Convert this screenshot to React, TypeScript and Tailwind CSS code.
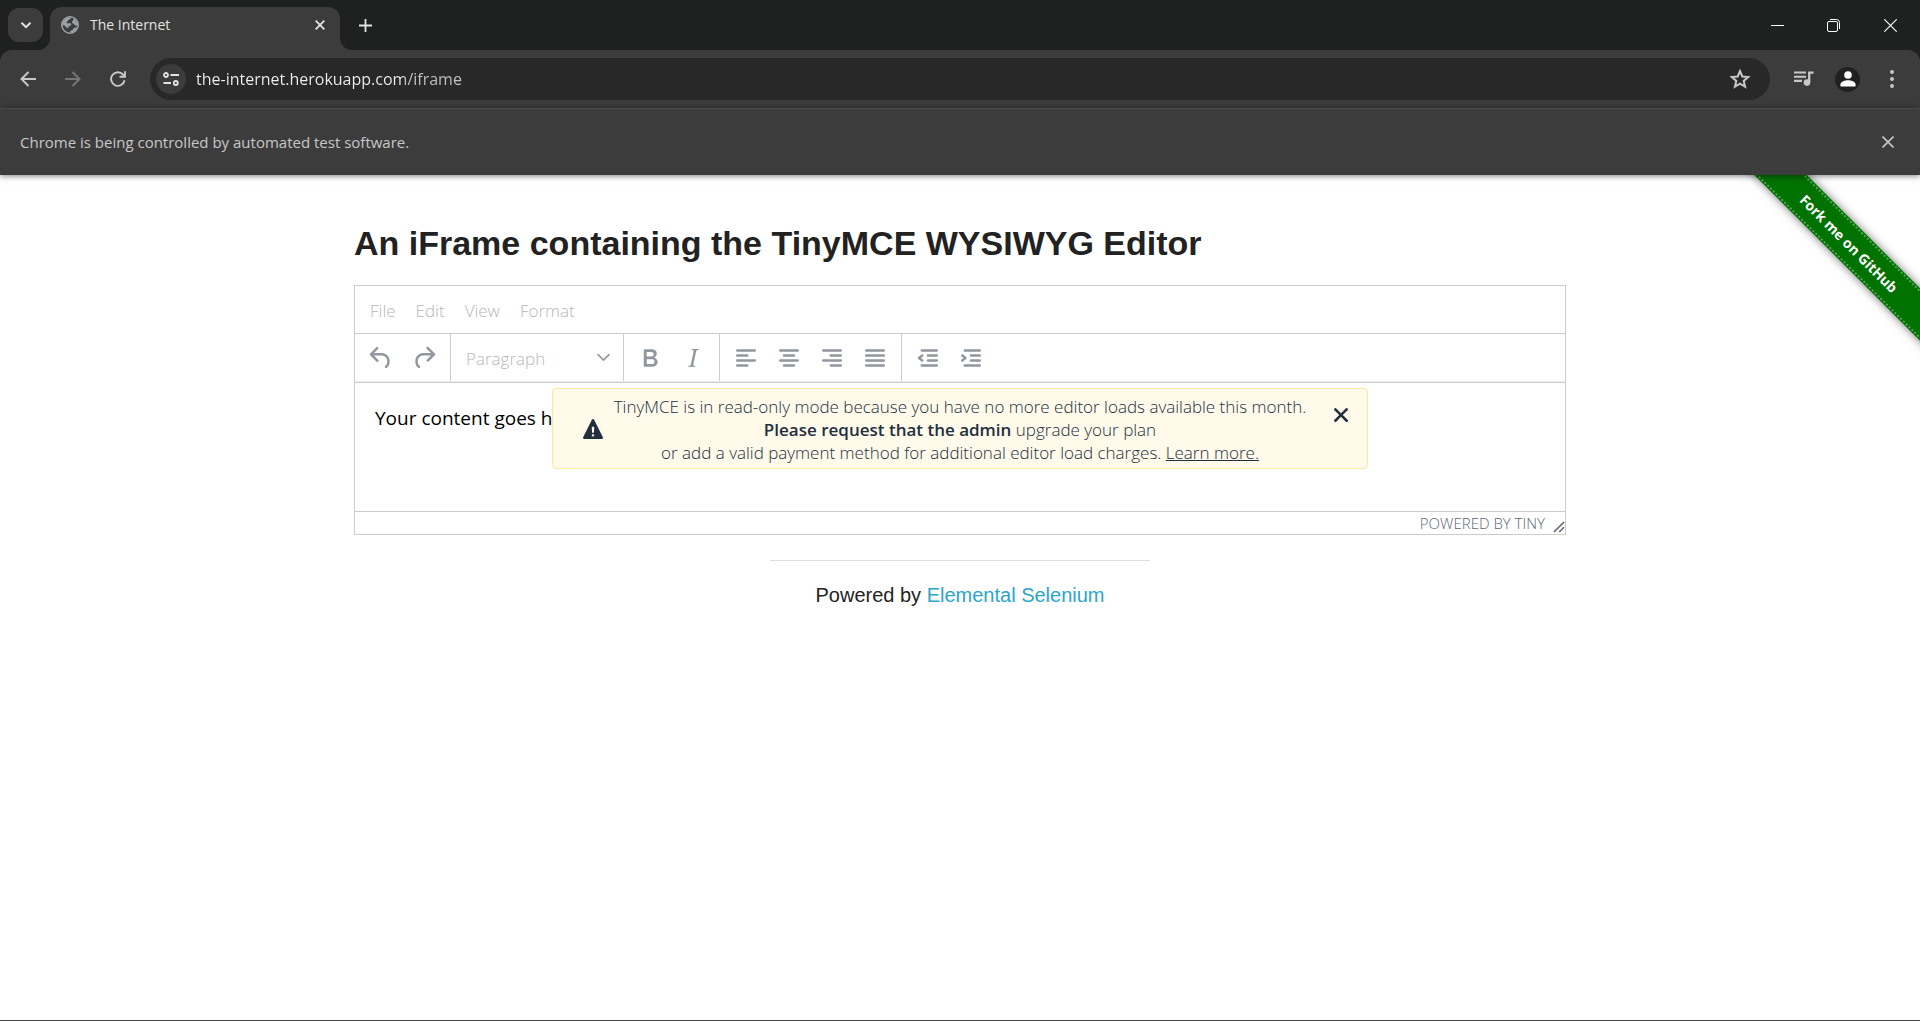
import type { ReactNode } from "react";

function Svg({ className, box = "0 0 24 24", children }: { className: string; box?: string; children: ReactNode }) {
  return (
    <svg viewBox={box} className={className} fill="none" stroke="currentColor" aria-hidden="true">
      {children}
    </svg>
  );
}

function TabStrip() {
  return (
    <div className="flex h-[50px] items-start bg-[#1f2120] text-[#e3e3e3]">
      <button aria-label="Search tabs" className="mt-2 ml-2 flex h-[34px] w-[35px] items-center justify-center rounded-[11px] bg-[#3c3c3c]">
        <Svg className="h-3 w-3" box="0 0 12 12">
          <path d="M1.5 3.8 6 8.2l4.5-4.4" strokeWidth="2" />
        </Svg>
      </button>
      <div className="relative ml-[7px] flex h-[43px] w-[290px] items-center self-end rounded-t-xl bg-[#3c3c3c] pr-[10px] pb-[7px] pl-[11px]">
        <Svg className="absolute bottom-0 -left-3 h-3 w-3 text-[#3c3c3c]" box="0 0 12 12">
          <path d="M12 0v12H0A12 12 0 0 0 12 0Z" fill="currentColor" stroke="none" />
        </Svg>
        <Svg className="absolute -right-3 bottom-0 h-3 w-3 text-[#3c3c3c]" box="0 0 12 12">
          <path d="M0 0v12h12A12 12 0 0 1 0 0Z" fill="currentColor" stroke="none" />
        </Svg>
        <Svg className="h-[18px] w-[18px]" box="0 0 18 18">
          <circle cx="9" cy="9" r="8.200" strokeWidth="1.600" className="text-[#9aa0a6]" />
          <g fill="#9aa0a6" stroke="none">
            <path d="M2 6C3 3 6 1 9.500 1.200c.8 1.500-.4 2.300-1.600 2.600-1 .3-.7 1.300-1.700 1.600-1 .4-.9 1.800.2 1.900h2.800c1.700 0 1.200 2.300 0 2.500-1.500.2-1.600.8-1.700 1.700-.2 1-2 .7-2.600-.4C4.300 9.900 3.300 9 1.200 8.900Z" />
            <path d="M12.500 2.200C15 3.500 16.800 6 16.900 9c-1.500 1.500-3 .6-3.500-.5-.5-1.200-2.300-.8-2.500-2.300-.2-1.300 1.900-1.700 1.600-4Z" />
            <path d="M16.200 11.500c-1 2.800-3.400 4.800-6.700 5.200-.9-1.500.3-2.200 1.500-2.500 1.300-.4.9-1.600 2-2.200.9-.6 2.200-.6 3.200-.5Z" />
          </g>
        </Svg>
        <span className="ml-[11px] grow text-sm">The Internet</span>
        <button aria-label="Close tab" className="flex h-5 w-5 items-center justify-center">
          <Svg className="h-[10px] w-[10px]" box="0 0 10 10">
            <path d="m.7.7 8.600 8.600M9.300.7.7 9.300" strokeWidth="1.800" />
          </Svg>
        </button>
      </div>
      <button aria-label="New tab" className="mt-[15px] ml-[15px] flex h-5 w-5 items-center justify-center">
        <Svg className="h-[13px] w-[13px]" box="0 0 13 13">
          <path d="M6.500 0v13M0 6.500h13" strokeWidth="1.800" />
        </Svg>
      </button>
      <div className="ml-auto flex h-[50px] items-center text-white">
        <button aria-label="Minimize" className="flex h-full w-14 items-center justify-center">
          <Svg className="h-[13px] w-[13px]" box="0 0 13 13">
            <path d="M0 6.500h13" />
          </Svg>
        </button>
        <button aria-label="Restore" className="flex h-full w-14 items-center justify-center">
          <Svg className="h-[13px] w-[13px]" box="0 0 13 13">
            <rect x=".5" y="2.500" width="10" height="10" rx="1.500" />
            <path d="M3 .5h6.500a3 3 0 0 1 3 3V10" />
          </Svg>
        </button>
        <button aria-label="Close window" className="flex h-full w-[59px] items-center justify-center">
          <Svg className="h-[13px] w-[13px]" box="0 0 13 13">
            <path d="m.3.3 12.400 12.400M12.700.3.3 12.700" strokeWidth="1.100" />
          </Svg>
        </button>
      </div>
    </div>
  );
}

function AddressBar() {
  return (
    <div className="bg-[#1f2120]">
      <div className="flex h-[58px] items-center rounded-t-xl bg-[#3c3c3c] text-[#c7c7c7]">
        <button aria-label="Back" className="ml-4 flex h-6 w-6 items-center justify-center">
          <Svg className="h-4 w-4" box="0 0 16 16">
            <path d="M16 8H1.500M8.500 1l-7 7 7 7" strokeWidth="2" />
          </Svg>
        </button>
        <button aria-label="Forward" disabled className="ml-[21px] flex h-6 w-6 items-center justify-center text-[#757575]">
          <Svg className="h-4 w-4" box="0 0 16 16">
            <path d="M0 8h14.500M7.500 1l7 7-7 7" strokeWidth="2" />
          </Svg>
        </button>
        <button aria-label="Reload" className="ml-[21px] flex h-6 w-6 items-center justify-center">
          <Svg className="h-4 w-4" box="0 0 16 16">
            <path d="M14.600 9.300A6.800 6.800 0 1 1 13 3.500l1.600 1.700M15 .3v5.400H9.500" strokeWidth="1.900" />
          </Svg>
        </button>
        <div className="ml-5 flex h-[42px] min-w-0 grow items-center rounded-full bg-[#282828] pr-[18px] pl-[6px]">
          <button aria-label="View site information" className="flex h-[30px] w-[30px] shrink-0 items-center justify-center rounded-full bg-[#3c3c3c] text-[#e3e3e3]">
            <Svg className="h-[14px] w-4" box="0 0 16 14">
              <circle cx="3" cy="3" r="2" strokeWidth="1.800" />
              <circle cx="12.800" cy="11" r="2" strokeWidth="1.800" />
              <path d="M7.500 3H16M.5 11H8" strokeWidth="1.800" />
            </Svg>
          </button>
          <input
            aria-label="Address"
            defaultValue="the-internet.herokuapp.com/iframe"
            className="ml-[10px] min-w-0 grow bg-[linear-gradient(to_right,#f0f0f0_207px,#c4c4c4_207px)] bg-clip-text text-base text-transparent outline-none"
          />
          <button aria-label="Bookmark this tab">
            <Svg className="h-6 w-6">
              <path d="m12 4 2.300 5.500 5.900.5-4.500 3.900 1.400 5.800-5.100-3.100-5.100 3.100 1.400-5.800L3.800 10l5.900-.5Z" strokeWidth="2" />
            </Svg>
          </button>
        </div>
        <button aria-label="Media controls" className="ml-[22px] flex h-6 w-6 items-center justify-center">
          <Svg className="h-4 w-5" box="0 0 20 16">
            <path d="M0 1.500h12M0 5.700h12M0 9.900h8" strokeWidth="2.100" />
            <path d="M15.200 11V1.600H19.500" strokeWidth="2.300" />
            <circle cx="13" cy="11.600" r="3.300" fill="currentColor" stroke="none" />
          </Svg>
        </button>
        <button aria-label="Profile" className="ml-[19px] flex h-[25px] w-[25px] items-center justify-center rounded-full bg-[#1f2120] text-white">
          <Svg className="h-4 w-4" box="0 0 16 16">
            <g fill="currentColor" stroke="none">
              <circle cx="8" cy="4" r="3.800" />
              <path d="M.5 15.500v-2.200C.5 10.500 5.300 9.200 8 9.200s7.500 1.300 7.500 4.100v2.200Z" />
            </g>
          </Svg>
        </button>
        <button aria-label="Menu" className="mr-4 ml-5 flex h-6 w-6 items-center justify-center">
          <Svg className="h-[18px] w-1" box="0 0 4 18">
            <g fill="currentColor" stroke="none">
              <circle cx="2" cy="2" r="2" />
              <circle cx="2" cy="9" r="2" />
              <circle cx="2" cy="16" r="2" />
            </g>
          </Svg>
        </button>
      </div>
    </div>
  );
}

function InfoBar() {
  return (
    <div className="relative z-10 flex h-[67px] items-center justify-between border-t border-[#4a4a4a] bg-[#3c3c3c] px-5 text-[#c7c7c7] shadow-[0_1px_6px_rgba(0,0,0,0.5)]">
      <p className="text-[15px]">Chrome is being controlled by automated test software.</p>
      <button aria-label="Dismiss" className="flex h-6 w-6 items-center justify-center">
        <Svg className="h-3 w-3" box="0 0 12 12">
          <path d="m.5.5 11 11m0-11-11 11" strokeWidth="1.600" />
        </Svg>
      </button>
    </div>
  );
}

function GitHubRibbon() {
  return (
    <div className="absolute top-0 right-0 h-[200px] w-[200px] overflow-hidden">
      <a
        href="#fork"
        className="absolute top-[50px] -left-[21px] flex h-[37px] w-[300px] rotate-45 items-center justify-center bg-[#007200] py-px text-white shadow-[0_0_10px_rgba(0,0,0,0.55)]"
      >
        <span className="flex h-full w-full items-center justify-center border-y-2 border-dotted border-[#55a555] text-sm font-bold">
          Fork me on GitHub
        </span>
      </a>
    </div>
  );
}

function ToolGroup({ last = false, children }: { last?: boolean; children: ReactNode }) {
  return (
    <div className={last ? "flex items-center gap-px px-[5px]" : "flex items-center gap-px border-r border-[#ccc] px-[5px]"}>
      {children}
    </div>
  );
}

function Tool({ label, children }: { label: string; children: ReactNode }) {
  return (
    <button aria-label={label} className="flex h-[42px] w-[42px] items-center justify-center">
      {children}
    </button>
  );
}

function Solid({ d }: { d: string }) {
  return (
    <Svg className="h-[30px] w-[30px]">
      <path d={d} fill="currentColor" stroke="none" />
    </Svg>
  );
}

function Lines({ d }: { d: string }) {
  return (
    <Svg className="h-[30px] w-[30px]">
      <path d={d} strokeWidth="2" strokeLinecap="round" strokeLinejoin="round" />
    </Svg>
  );
}

function Toolbar() {
  return (
    <div role="toolbar" className="flex h-[49px] border-t border-b border-t-[#ccc] border-b-[#eee] text-[#90979e]">
      <ToolGroup>
        <Tool label="Undo">
          <Solid d="M6.4 8H12c3.7 0 6.2 2 6.8 5.1.6 2.7-.4 5.6-2.3 6.8a1 1 0 0 1-1-1.8c1.1-.6 1.8-2.7 1.4-4.6-.5-2.1-2.1-3.5-4.9-3.5H6.4l3.3 3.3a1 1 0 1 1-1.4 1.4l-5-5a1 1 0 0 1 0-1.4l5-5a1 1 0 0 1 1.4 1.4L6.4 8Z" />
        </Tool>
        <Tool label="Redo">
          <Solid d="M17.6 10H12c-2.8 0-4.4 1.4-4.9 3.5-.4 2 .3 4 1.4 4.6a1 1 0 1 1-1 1.8c-2-1.2-2.9-4.1-2.3-6.8.6-3 3-5.1 6.8-5.1h5.6l-3.3-3.3a1 1 0 1 1 1.4-1.4l5 5a1 1 0 0 1 0 1.4l-5 5a1 1 0 0 1-1.4-1.4l3.3-3.3Z" />
        </Tool>
      </ToolGroup>
      <ToolGroup>
        <div className="relative flex w-[162px] items-center">
          <select aria-label="Block format" className="w-full appearance-none bg-transparent pt-[2px] pl-[10px] text-[17px] font-light text-[#b4b8bd] outline-none">
            <option>Paragraph</option>
          </select>
          <Svg className="pointer-events-none absolute right-[8px] h-[13px] w-[13px]" box="0 0 10 10">
            <path d="m.8 2.800 4.200 4.200 4.200-4.200" strokeWidth="1.200" strokeLinecap="round" />
          </Svg>
        </div>
      </ToolGroup>
      <ToolGroup>
        <Tool label="Bold">
          <Solid d="M7.8 19c-.3 0-.5 0-.6-.2l-.2-.5V5.700c0-.2 0-.4.2-.5l.6-.2h5c1.500 0 2.700.3 3.500 1 .7.6 1.100 1.400 1.100 2.500a3 3 0 0 1-.6 1.900c-.4.6-1 1-1.600 1.200.4.1.9.3 1.300.6s.8.7 1 1.200c.4.4.5 1 .5 1.600 0 1.300-.4 2.300-1.300 3-.8.7-2.100 1-3.800 1H7.800Zm5-8.300c.6 0 1.200-.1 1.600-.5.4-.3.6-.7.6-1.300 0-1.100-.8-1.700-2.300-1.700H9.300v3.500h3.400Zm.5 6c.7 0 1.300-.1 1.700-.4.4-.4.6-.9.6-1.500s-.2-1-.7-1.400c-.4-.3-1-.4-2-.4H9.400v3.800h4Z" />
        </Tool>
        <Tool label="Italic">
          <Solid d="m16.700 4.700-.1.9h-.3c-.6 0-1 0-1.400.3-.3.3-.4.6-.5 1.100l-2.100 9.800v.6c0 .5.4.8 1.400.8h.2l-.2.8H8l.2-.8h.2c1.100 0 1.800-.5 2-1.500l2-9.800.1-.5c0-.6-.4-.8-1.400-.8h-.3l.2-.9h5.700Z" />
        </Tool>
      </ToolGroup>
      <ToolGroup>
        <Tool label="Align left">
          <Lines d="M5 6h14M5 10h8M5 14h14M5 18h8" />
        </Tool>
        <Tool label="Align center">
          <Lines d="M5 6h14M8 10h8M5 14h14M8 18h8" />
        </Tool>
        <Tool label="Align right">
          <Lines d="M5 6h14M11 10h8M5 14h14M11 18h8" />
        </Tool>
        <Tool label="Justify">
          <Lines d="M5 6h14M5 10h14M5 14h14M5 18h14" />
        </Tool>
      </ToolGroup>
      <ToolGroup last>
        <Tool label="Decrease indent">
          <Lines d="M7 6h12M12 10h7M12 14h7M7 18h12M7.400 10 4.800 12l2.600 2" />
        </Tool>
        <Tool label="Increase indent">
          <Lines d="M7 6h12M12 10h7M12 14h7M7 18h12M5 10l2.600 2L5 14" />
        </Tool>
      </ToolGroup>
    </div>
  );
}

function Notification() {
  return (
    <div className="absolute inset-x-0 top-[5px] flex justify-center">
      <div role="alert" className="flex h-[81px] w-[816px] items-center rounded border border-[#ffe89d] bg-[#fffaea] pr-[11px] pl-[25px] text-[#222f3e]">
        <span className="shrink-0">
          <Solid d="M19.800 18.300c.2.5.3.9 0 1.200-.1.3-.5.5-1 .5H5.200c-.5 0-.9-.2-1-.5-.3-.3-.2-.7 0-1.200L11 4.700l.5-.5.5-.2c.2 0 .3 0 .5.2.2 0 .3.3.5.5l6.800 13.600ZM12 18c.3 0 .5-.1.7-.3.2-.2.3-.4.3-.7a1 1 0 0 0-.3-.7 1 1 0 0 0-.7-.3 1 1 0 0 0-.7.3 1 1 0 0 0-.3.7c0 .3.1.5.3.7.2.2.4.3.7.3Zm.7-3 .3-4a1 1 0 0 0-.3-.7 1 1 0 0 0-.7-.3 1 1 0 0 0-.7.3 1 1 0 0 0-.3.7l.3 4h1.400Z" />
        </span>
        <p className="mr-[14px] min-w-0 grow pt-[2px] text-center text-[17px] leading-[23px] font-[350] whitespace-nowrap">
          TinyMCE is in read-only mode because you have no more editor loads available this month.
          <br />
          <b className="font-semibold">Please request that the admin</b> upgrade your plan
          <br />
          or add a valid payment method for additional editor load charges.{" "}
          <a href="#learn" className="underline">
            Learn more.
          </a>
        </p>
        <button aria-label="Close" className="mt-[11px] shrink-0 self-start">
          <Solid d="M17.300 8.200 13.400 12l3.900 3.800a1 1 0 0 1-1.500 1.500L12 13.400l-3.800 3.900a1 1 0 0 1-1.500-1.500l3.900-3.800-3.900-3.800a1 1 0 0 1 1.500-1.500l3.800 3.900 3.800-3.900a1 1 0 0 1 1.500 1.500Z" />
        </button>
      </div>
    </div>
  );
}

function Editor() {
  return (
    <div className="mt-[19px] border border-[#ccc]">
      <div role="menubar" className="flex h-[47px] items-center px-[5px] pt-[2px] text-[17px] font-light text-[#b4b8bd]">
        <button role="menuitem" className="px-[10px]">File</button>
        <button role="menuitem" className="px-[10px]">Edit</button>
        <button role="menuitem" className="px-[10px]">View</button>
        <button role="menuitem" className="px-[10px]">Format</button>
      </div>
      <Toolbar />
      <div className="relative h-[129px] border-t border-[#ccc] px-5 pt-[21px]">
        <p className="text-[19px] leading-7 text-black">Your content goes here.</p>
        <Notification />
      </div>
      <div className="flex h-[23px] items-center justify-end border-t border-[#ccc] text-[#5b6672]">
        <a href="#tiny" className="text-[15px] font-light">POWERED BY TINY</a>
        <Svg className="mt-2 ml-2 h-3 w-3" box="0 0 10 10">
          <path d="M.8 9.200 9.200.8M5.200 9.200l4-4" strokeWidth="1.300" />
        </Svg>
      </div>
    </div>
  );
}

export default function App() {
  return (
    <div className="flex min-h-screen flex-col border-b border-[#444] bg-white font-['Open_Sans',sans-serif]">
      <header>
        <TabStrip />
        <AddressBar />
        <InfoBar />
      </header>
      <div className="relative grow">
        <GitHubRibbon />
        <main className="mx-auto max-w-[1250px] px-[19px] pt-[46px]">
          <h3 className="font-['Liberation_Sans',sans-serif] text-[34px] leading-[45px] font-bold text-[#222]">
            An iFrame containing the TinyMCE WYSIWYG Editor
          </h3>
          <Editor />
        </main>
        <footer className="mx-auto mt-[25px] w-[380px] border-t border-[#ddd] pt-5 text-center font-['Liberation_Sans',sans-serif] text-xl leading-7 text-[#222]">
          Powered by{" "}
          <a href="#selenium" className="text-[#2ba6cb]">
            Elemental Selenium
          </a>
        </footer>
      </div>
    </div>
  );
}
